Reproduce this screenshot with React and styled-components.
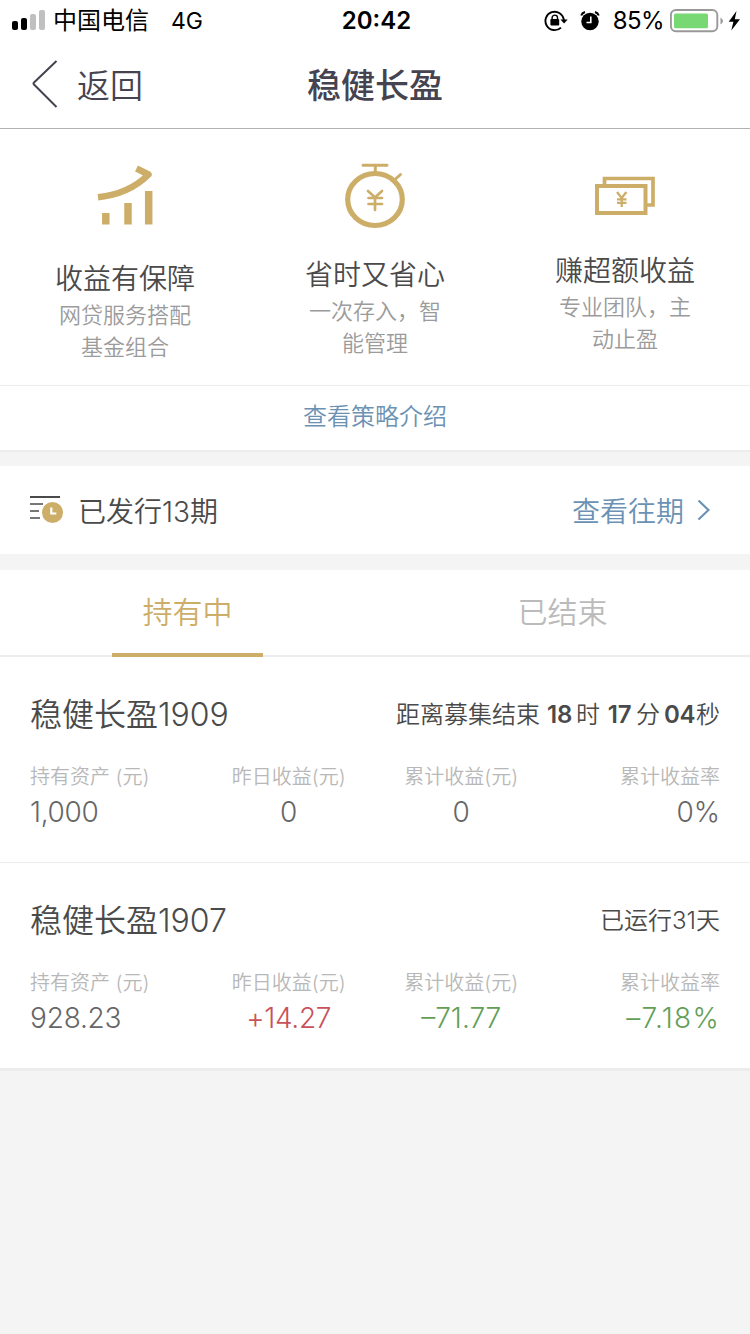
import styled, { createGlobalStyle } from "styled-components";

const GlobalStyle = createGlobalStyle`
  * {
    box-sizing: border-box;
  }
  body {
    margin: 0;
    background: #f4f4f4;
    color: #4a4a4a;
    font-family: Inter, "Noto Sans CJK SC", sans-serif;
    font-weight: 350;
  }
`;

const Page = styled.main`
  width: 750px;
  min-height: 1334px;
`;

const StatusBar = styled.header`
  display: grid;
  grid-template-columns: 1fr auto 1fr;
  align-items: center;
  height: 40px;
  padding: 1px 9px 0 12px;
  background: #fff;
  color: #000;
  font-size: 24px;
  font-weight: 400;
  line-height: 38px;
`;

const StatusGroup = styled.div`
  display: flex;
  align-items: center;
  justify-content: ${(props) => props.$justify || "flex-start"};
`;

const Signal = styled.div`
  display: flex;
  align-items: flex-end;
  gap: 3px;
  margin: 0 8px 1px 0;
`;

const SignalBar = styled.span`
  width: 6px;
  height: ${(props) => props.$height}px;
  border-radius: 2px;
  background: ${(props) => (props.$on ? "#000" : "#c0c0c0")};
`;

const Carrier = styled.span`
  padding-top: 1px;
`;

const Network = styled.span`
  margin-left: 22px;
  font-size: 23px;
`;

const Clock = styled.time`
  font-size: 24px;
  font-weight: 600;
`;

const Percent = styled.span`
  margin: 0 6px 0 13px;
  letter-spacing: -0.6px;
`;

const AlarmSlot = styled.span`
  display: flex;
  margin-left: 12px;
`;

const NavBar = styled.nav`
  display: grid;
  grid-template-columns: 1fr auto 1fr;
  align-items: center;
  height: 89px;
  padding: 0 32px;
  border-bottom: 1px solid #b2b2b2;
  background: #fff;
  color: #45434f;
`;

const Back = styled.a`
  display: flex;
  align-items: center;
  gap: 19px;
  font-size: 33px;
  line-height: 48px;
`;

const BackText = styled.span`
  padding-top: 3px;
`;

const Title = styled.h1`
  margin: 0;
  padding-top: 3px;
  font-size: 34px;
  font-weight: 500;
  line-height: 48px;
`;

const Features = styled.section`
  display: grid;
  grid-template-columns: repeat(3, 1fr);
  height: 256px;
  background: #fff;
`;

const Feature = styled.div`
  display: flex;
  flex-direction: column;
  align-items: center;
  padding-top: 34px;
`;

const FeatureIcon = styled.svg`
  width: 64px;
  height: 66px;
  margin-bottom: ${(props) => props.$gap}px;
  fill: none;
  stroke: #cdae69;
`;

const FeatureTitle = styled.h2`
  margin: 0;
  font-size: 28px;
  font-weight: 350;
  line-height: 40px;
`;

const FeatureText = styled.p`
  width: 134px;
  margin: 0;
  color: #9b9b9b;
  font-size: 22px;
  line-height: 32px;
  text-align: center;
`;

const StrategyLink = styled.a`
  display: block;
  height: 67px;
  border-top: 1px solid #ececec;
  border-bottom: 2px solid #ececec;
  background: #fff;
  color: #6b92b4;
  font-size: 24px;
  line-height: 61px;
  text-align: center;
`;

const Issued = styled.section`
  display: flex;
  align-items: center;
  height: 88px;
  margin: 14px 0 16px;
  padding: 0 40px 0 30px;
  background: #fff;
  font-size: 28px;
  line-height: 40px;
`;

const IssuedText = styled.span`
  flex: 1;
  margin-left: 14px;
  padding-top: 3px;
`;

const HistoryLink = styled.a`
  display: flex;
  align-items: center;
  gap: 13px;
  color: #6b92b4;
`;

const HistoryText = styled.span`
  padding-top: 3px;
`;

const Tabs = styled.div`
  display: grid;
  grid-template-columns: 1fr 1fr;
  height: 87px;
  border-bottom: 2px solid #ececec;
  background: #fff;
`;

const Tab = styled.div`
  justify-self: center;
  width: 151px;
  height: 87px;
  border-bottom: 4px solid ${(props) => (props.$active ? "#cdae69" : "transparent")};
  color: ${(props) => (props.$active ? "#cdae69" : "#bbb")};
  font-size: 30px;
  line-height: 84px;
  text-align: center;
`;

const Fund = styled.article`
  height: 206px;
  padding: 39px 30px 0;
  border-bottom: 1px solid #ececec;
  background: #fff;

  &:last-child {
    height: 208px;
    border-bottom-width: 3px;
  }
`;

const FundHead = styled.div`
  display: flex;
  align-items: center;
  justify-content: space-between;
  height: 38px;
  line-height: 38px;
`;

const FundName = styled.h3`
  margin: 0;
  font-size: 32px;
  font-weight: 350;
`;

const FundStatus = styled.div`
  font-size: 24px;
`;

const Digits = styled.b`
  display: inline-block;
  width: 36px;
  padding-left: 3px;
  font-weight: 600;
  letter-spacing: -0.3px;
  text-align: center;
`;

const Stats = styled.div`
  display: grid;
  grid-template-columns: repeat(4, 1fr);
  margin-top: 28px;
`;

const Stat = styled.div`
  text-align: center;

  &:first-child {
    text-align: left;
  }
  &:last-child {
    text-align: right;
  }
`;

const StatLabel = styled.div`
  color: #b8b8b8;
  font-size: 20px;
  line-height: 30px;
`;

const StatValue = styled.div`
  color: ${(props) => props.$color || "#666"};
  font-size: 28px;
  line-height: 40px;
  letter-spacing: ${(props) => props.$tracking || 0}px;
`;

const GrowthIcon = () => (
  <FeatureIcon viewBox="0 0 64 66" $gap={30}>
    <path d="M5 34.200Q36 31 55.500 11.500L43.500 5.500" strokeWidth="6.500" strokeLinejoin="round" />
    <path d="M12.800 50v11.500M35 40v21.500M55.700 28v33.500" strokeWidth="7.500" />
  </FeatureIcon>
);

const TimerIcon = () => (
  <FeatureIcon viewBox="0 0 64 66" $gap={26}>
    <ellipse cx="32" cy="36.500" rx="27.300" ry="26" strokeWidth="5.200" />
    <path d="M20 2.300h24M32.300 2v8M52 16.500l5.500-5" strokeWidth="3" strokeLinecap="round" />
    <path d="M25 28l7 6.500 7-6.500M32 34v13M25.500 35h13.500M25.500 41h13.500" strokeWidth="2.700" strokeLinecap="round" />
  </FeatureIcon>
);

const NotesIcon = () => (
  <FeatureIcon viewBox="0 0 64 66" $gap={22}>
    <path d="M11.500 22v-6.500h48.500v26.500h-7" strokeWidth="3.700" />
    <rect x="4" y="23" width="48.500" height="27" strokeWidth="4" />
    <path d="M24 29l4.700 6 4.700-6M28.700 35v9M24 36.300h9.500M24 39.900h9.500" strokeWidth="2.300" />
  </FeatureIcon>
);

const LockIcon = () => (
  <svg width="24" height="22" viewBox="0 0 24 22" fill="none" stroke="#000">
    <path d="M19.800 10A9.200 9.200 0 1 0 17 17.600" strokeWidth="1.900" />
    <path d="M16.400 9.500h7.300l-3.600 4z" fill="#000" stroke="none" />
    <rect x="6.400" y="9" width="8.800" height="6.500" rx="1" fill="#000" stroke="none" />
    <path d="M8.100 9.500V7.800a2.700 2.700 0 0 1 5.400 0v1.700" strokeWidth="1.400" />
  </svg>
);

const AlarmIcon = () => (
  <svg width="20" height="22" viewBox="0 0 20 22" fill="none">
    <circle cx="10" cy="11.500" r="8.700" fill="#000" />
    <path d="M1.200 5.500Q2 3 5 2M15 2Q18 3 18.800 5.500" stroke="#000" strokeWidth="1.900" />
    <path d="M10.800 6.500v6H6.500" stroke="#fff" strokeWidth="1.600" />
  </svg>
);

const BatteryIcon = () => (
  <svg width="71" height="24" viewBox="0 0 71 24" fill="none">
    <rect x="0.900" y="1" width="46.400" height="21.200" rx="5" stroke="#999" strokeWidth="1.900" />
    <rect x="4" y="4.500" width="34" height="14.700" rx="1.500" fill="#78d873" />
    <path d="M50.500 8.500q5 3.300 0 7z" fill="#999" />
    <path d="M66.500 2L58.700 12.800h4.700L61.300 21.500 70 10.300h-5.200z" fill="#000" />
  </svg>
);

const ListClockIcon = () => (
  <svg width="34" height="30" viewBox="0 0 34 30" fill="none">
    <path d="M0 2h30" stroke="#4a4a4a" strokeWidth="2" />
    <path d="M0 9h13M0 16h9M0 23h10" stroke="#777" strokeWidth="2" />
    <circle cx="22.500" cy="17.500" r="10.500" fill="#cdae69" />
    <path d="M21.300 12.500v6h5" stroke="#fff" strokeWidth="2.200" />
  </svg>
);

const features = [
  { icon: <GrowthIcon />, title: "收益有保障", lines: ["网贷服务搭配", "基金组合"] },
  { icon: <TimerIcon />, title: "省时又省心", lines: ["一次存入，智", "能管理"] },
  { icon: <NotesIcon />, title: "赚超额收益", lines: ["专业团队，主", "动止盈"] },
];

const labels = ["持有资产 (元)", "昨日收益(元)", "累计收益(元)", "累计收益率"];

const RED = "#c9515a";
const GREEN = "#639e57";

const funds = [
  {
    name: "稳健长盈1909",
    status: (
      <>
        距离募集结束<Digits>18</Digits>时<Digits>17</Digits>分<Digits>04</Digits>秒
      </>
    ),
    values: [
      { text: "1,000", tracking: -0.3 },
      { text: "0" },
      { text: "0" },
      { text: "0%" },
    ],
  },
  {
    name: "稳健长盈1907",
    status: "已运行31天",
    values: [
      { text: "928.23", tracking: -0.2 },
      { text: "+14.27", color: RED, tracking: -0.3 },
      { text: "–71.77", color: GREEN },
      { text: "–7.18%", color: GREEN, tracking: 1.3 },
    ],
  },
];

const App = () => (
  <>
    <GlobalStyle />
    <Page>
      <StatusBar>
        <StatusGroup>
          <Signal>
            <SignalBar $height={9} $on />
            <SignalBar $height={12} $on />
            <SignalBar $height={16} />
            <SignalBar $height={20} />
          </Signal>
          <Carrier>中国电信</Carrier>
          <Network>4G</Network>
        </StatusGroup>
        <Clock>20:42</Clock>
        <StatusGroup $justify="flex-end">
          <LockIcon />
          <AlarmSlot>
            <AlarmIcon />
          </AlarmSlot>
          <Percent>85%</Percent>
          <BatteryIcon />
        </StatusGroup>
      </StatusBar>
      <NavBar>
        <Back>
          <svg width="26" height="48" viewBox="0 0 26 48" fill="none" stroke="#45434f" strokeWidth="2">
            <path d="M24.500 1L2 22.500q-1 1 0 2L24.500 47" />
          </svg>
          <BackText>返回</BackText>
        </Back>
        <Title>稳健长盈</Title>
      </NavBar>
      <Features>
        {features.map((item) => (
          <Feature key={item.title}>
            {item.icon}
            <FeatureTitle>{item.title}</FeatureTitle>
            <FeatureText>
              {item.lines[0]}
              <br />
              {item.lines[1]}
            </FeatureText>
          </Feature>
        ))}
      </Features>
      <StrategyLink>查看策略介绍</StrategyLink>
      <Issued>
        <ListClockIcon />
        <IssuedText>已发行13期</IssuedText>
        <HistoryLink>
          <HistoryText>查看往期</HistoryText>
          <svg width="13" height="22" viewBox="0 0 13 22" fill="none" stroke="#6b92b4" strokeWidth="2.200">
            <path d="M1.500 1.500L11.500 11L1.500 20.500" />
          </svg>
        </HistoryLink>
      </Issued>
      <Tabs>
        <Tab $active>持有中</Tab>
        <Tab>已结束</Tab>
      </Tabs>
      {funds.map((fund) => (
        <Fund key={fund.name}>
          <FundHead>
            <FundName>{fund.name}</FundName>
            <FundStatus>{fund.status}</FundStatus>
          </FundHead>
          <Stats>
            {fund.values.map((value, i) => (
              <Stat key={labels[i]}>
                <StatLabel>{labels[i]}</StatLabel>
                <StatValue $color={value.color} $tracking={value.tracking}>
                  {value.text}
                </StatValue>
              </Stat>
            ))}
          </Stats>
        </Fund>
      ))}
    </Page>
  </>
);

export default App;
